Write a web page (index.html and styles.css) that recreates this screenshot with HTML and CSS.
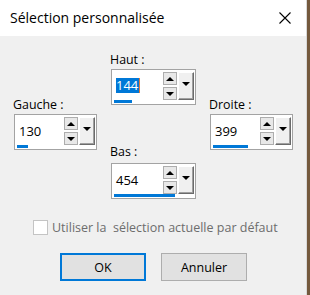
FILE: index.html
```html
<!DOCTYPE html>
<html lang="fr">
<head>
    <meta charset="UTF-8">
    <link rel="stylesheet" href="styles.css">
    <title>Sélection personnalisée</title>
</head>
<body>
    <div class="dialog">
        <div class="titlebar">
            <span class="title">Sélection personnalisée</span>
            <svg class="close" width="12" height="12" viewBox="0 0 12 12">
                <path d="M0.5 0.5 L11.5 11.5 M11.5 0.5 L0.5 11.5" stroke="#000" stroke-width="1.1" fill="none"/>
            </svg>
        </div>
        <div class="content">
            <div class="fields">
                <div class="col side">
                    <div class="label">Gauche :</div>
                    <div class="spin">
                        <div class="field">130</div>
                        <div class="arrows">
                            <div class="arrow"><span class="tri up"></span></div>
                            <div class="arrow"><span class="tri down"></span></div>
                        </div>
                        <div class="drop"><span class="tri down"></span></div>
                        <div class="track"><div class="bar" style="width: 11px"></div></div>
                    </div>
                </div>
                <div class="col middle">
                    <div class="group">
                        <div class="label">Haut :</div>
                        <div class="spin">
                            <div class="field"><span class="selected">144</span><span class="caret"></span></div>
                            <div class="arrows">
                                <div class="arrow"><span class="tri up"></span></div>
                                <div class="arrow"><span class="tri down"></span></div>
                            </div>
                            <div class="drop"><span class="tri down"></span></div>
                            <div class="track"><div class="bar" style="width: 18px"></div></div>
                        </div>
                    </div>
                    <div class="group">
                        <div class="label">Bas :</div>
                        <div class="spin">
                            <div class="field">454</div>
                            <div class="arrows">
                                <div class="arrow"><span class="tri up"></span></div>
                                <div class="arrow"><span class="tri down"></span></div>
                            </div>
                            <div class="drop"><span class="tri down"></span></div>
                            <div class="track"><div class="bar" style="width: 61px"></div></div>
                        </div>
                    </div>
                </div>
                <div class="col side">
                    <div class="label">Droite :</div>
                    <div class="spin">
                        <div class="field">399</div>
                        <div class="arrows">
                            <div class="arrow"><span class="tri up"></span></div>
                            <div class="arrow"><span class="tri down"></span></div>
                        </div>
                        <div class="drop"><span class="tri down"></span></div>
                        <div class="track"><div class="bar" style="width: 35px"></div></div>
                    </div>
                </div>
            </div>
            <label class="check">
                <span class="box"></span>
                <span class="check-text">Utiliser la&nbsp; sélection actuelle par défaut</span>
            </label>
            <div class="buttons">
                <button class="btn default">OK</button>
                <button class="btn">Annuler</button>
            </div>
        </div>
    </div>
</body>
</html>
```

FILE: styles.css
```css
body {
    margin: 0;
    width: 310px;
    height: 295px;
    background-color: #74593d;
    font-family: "Open Sans", "Noto Sans", sans-serif;
    overflow: hidden;
}

.dialog {
    width: 306px;
    height: 295px;
    border-right: 1px solid #d8d8d8;
    background-color: #f0f0f0;
}

.titlebar {
    height: 36px;
    background-color: #fff;
    display: flex;
    align-items: center;
    justify-content: space-between;
    padding: 0 15px 0 10px;
}

.title {
    font-size: 14px;
    color: #000;
    margin-top: -1px;
}

.close {
    display: block;
    margin-top: -1px;
}

.content {
    padding-top: 16px;
}

.fields {
    display: flex;
    align-items: flex-start;
    padding-left: 13px;
    gap: 13px;
}

.col {
    display: flex;
    flex-direction: column;
}

.side {
    margin-top: 45px;
    width: 84px;
}

.middle {
    width: 86px;
    gap: 39px;
}

.label {
    font-size: 12.4px;
    line-height: 16px;
    height: 16px;
    margin-bottom: 1px;
    color: #000;
}

.middle .group:last-child .label {
    margin-bottom: 3px;
}

.spin {
    box-sizing: border-box;
    height: 36px;
    margin-left: 1px;
    border: 1px solid #a3a3a3;
    background-color: #fff;
    display: grid;
    grid-template-columns: 1fr 14px 16px;
    grid-template-rows: 1fr 3px;
    column-gap: 1px;
    padding: 1px 1px 1px 2px;
}

.field {
    display: flex;
    align-items: center;
    padding-left: 2px;
    font-size: 13px;
    color: #000;
}

.selected {
    background-color: #0078d7;
    color: #fff;
    line-height: 15px;
    padding: 0 1px 0 0;
}

.caret {
    width: 1px;
    height: 15px;
    background-color: #e07b39;
}

.arrows {
    display: flex;
    flex-direction: column;
    gap: 2px;
    padding-top: 1px;
}

.arrow {
    box-sizing: border-box;
    height: 13px;
    border: 1px solid #adadad;
    background-color: #e8e8e8;
    display: flex;
    align-items: center;
    justify-content: center;
}

.drop {
    box-sizing: border-box;
    margin-top: 1px;
    border: 1px solid;
    border-color: #fff #6b6b6b #6b6b6b #fff;
    box-shadow: inset -1px -1px 0 #a0a0a0;
    background-color: #f0f0f0;
    display: flex;
    justify-content: center;
    padding-top: 9px;
}

.tri {
    width: 0;
    height: 0;
    border-left: 4px solid transparent;
    border-right: 4px solid transparent;
}

.tri.up {
    border-bottom: 4px solid #000;
}

.tri.down {
    border-top: 4px solid #000;
}

.track {
    grid-column: 1 / -1;
}

.bar {
    height: 3px;
    background-color: #0078d7;
}

.check {
    display: flex;
    align-items: center;
    gap: 4px;
    margin: 20px 0 0 33px;
}

.box {
    box-sizing: border-box;
    width: 15px;
    height: 15px;
    border: 1px solid #c4c4c4;
    background-color: #fff;
}

.check-text {
    font-size: 12.5px;
    color: #6d6d6d;
}

.buttons {
    display: flex;
    gap: 15px;
    margin: 17px 0 0 60px;
}

.btn {
    box-sizing: border-box;
    width: 86px;
    height: 28px;
    font-family: inherit;
    font-size: 12.5px;
    color: #000;
    background-color: #e1e1e1;
    border: 1px solid #adadad;
    padding: 0;
}

.btn.default {
    border: 2px solid #0078d7;
}
```
